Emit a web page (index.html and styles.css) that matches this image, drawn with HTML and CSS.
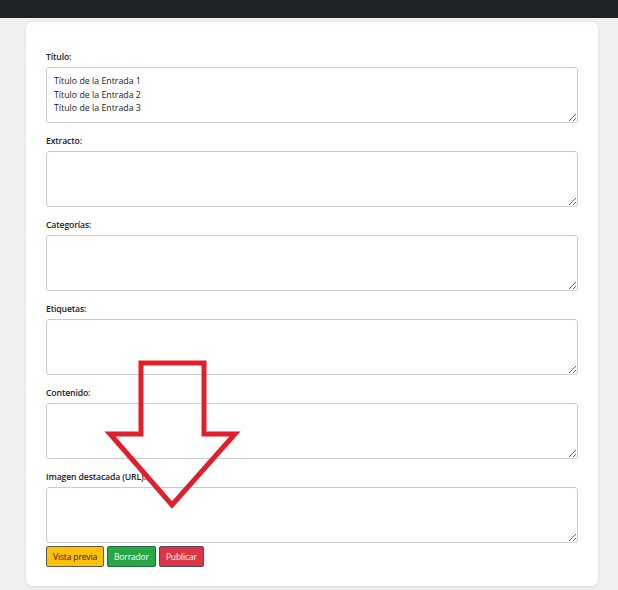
FILE: index.html
```html
<!DOCTYPE html>
<html lang="es">
<head>
<meta charset="utf-8">
<title>Nueva entrada</title>
<link rel="stylesheet" href="styles.css">
</head>
<body>
<header class="topbar"></header>
<main class="page">
  <form class="card">
    <div class="group">
      <label class="label">Título:</label>
      <textarea class="field">Título de la Entrada 1
Título de la Entrada 2
Título de la Entrada 3</textarea>
    </div>
    <div class="group">
      <label class="label">Extracto:</label>
      <textarea class="field"></textarea>
    </div>
    <div class="group">
      <label class="label">Categorías:</label>
      <textarea class="field"></textarea>
    </div>
    <div class="group">
      <label class="label">Etiquetas:</label>
      <textarea class="field"></textarea>
    </div>
    <div class="group">
      <label class="label">Contenido:</label>
      <textarea class="field"></textarea>
    </div>
    <div class="group last">
      <label class="label">Imagen destacada (URL):</label>
      <textarea class="field"></textarea>
    </div>
    <div class="actions">
      <button type="button" class="btn btn-warning">Vista previa</button>
      <button type="button" class="btn btn-success">Borrador</button>
      <button type="button" class="btn btn-danger">Publicar</button>
    </div>
  </form>
</main>
<svg class="arrow" width="618" height="590" viewBox="0 0 618 590">
  <polygon points="141,363 204,363 204,434 235,434 172,505 110,434 141,434" fill="none" stroke="#e01f2d" stroke-width="5" stroke-linejoin="miter"/>
</svg>
</body>
</html>
```

FILE: styles.css
```css
html, body {
  margin: 0;
  padding: 0;
}
body {
  background: #efefef;
  font-family: "Open Sans", "Noto Sans", sans-serif;
  color: #212529;
  width: 618px;
  height: 590px;
  overflow: hidden;
  position: relative;
}
.topbar {
  height: 18px;
  background: #1f2327;
}
.page {
  padding: 4px 20px 0 26px;
}
.card {
  background: #fff;
  border-radius: 7px;
  box-shadow: 0 1px 3px rgba(0,0,0,0.08);
  padding: 29px 20px 19px 20px;
  width: 532px;
}
.group {
  display: flex;
  flex-direction: column;
  margin-bottom: 12px;
}
.group.last {
  margin-bottom: 3px;
}
.label {
  font-size: 8.7px;
  font-weight: 600;
  line-height: 12px;
  margin-bottom: 4px;
  color: #222;
  letter-spacing: -0.15px;
}
.field {
  box-sizing: border-box;
  height: 56px;
  width: 100%;
  border: 1px solid #cdcdcd;
  border-radius: 3px;
  padding: 7px 7px 4px 7px;
  font-family: "Open Sans", "Noto Sans", sans-serif;
  font-size: 8.8px;
  line-height: 13.6px;
  color: #222;
  resize: vertical;
  margin: 0;
  overflow: hidden;
}
.actions {
  display: flex;
  gap: 3px;
}
.btn {
  height: 21px;
  padding: 0 6px;
  font-family: "Open Sans", "Noto Sans", sans-serif;
  font-size: 8.5px;
  letter-spacing: -0.15px;
  border-radius: 2px;
  border: 1px solid #555;
  cursor: pointer;
}
.btn-warning {
  background: #ffc107;
  color: #1a1a1a;
  border-color: #5d5a4c;
}
.btn-success {
  background: #28a745;
  color: #fff;
  border-color: #27624a;
}
.btn-danger {
  background: #dc3545;
  color: #fff;
  border-color: #4e4a6a;
}
.arrow {
  position: absolute;
  left: 0;
  top: 0;
  pointer-events: none;
}
```
